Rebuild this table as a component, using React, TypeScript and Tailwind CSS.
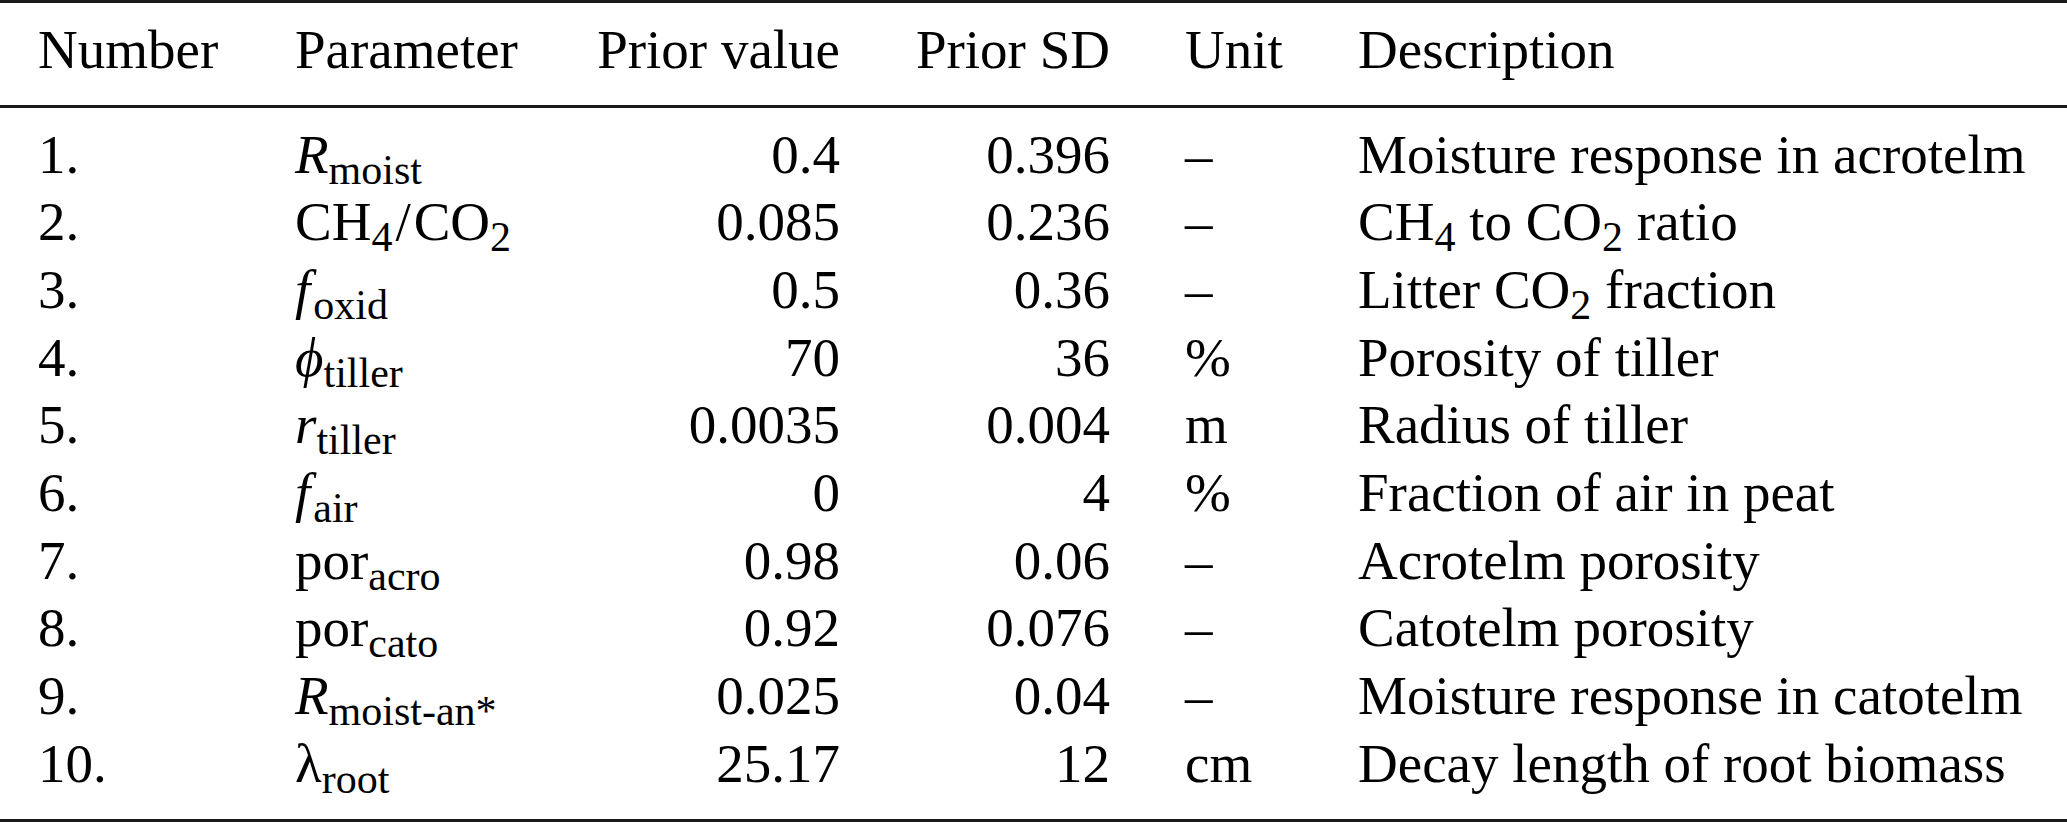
import React from "react";

const Sub = ({ children }: { children: React.ReactNode }) => (
  <span className="relative top-[11px] text-[42px] leading-none">{children}</span>
);

const I = ({ children }: { children: React.ReactNode }) => <span className="italic">{children}</span>;

type Row = {
  n: string;
  p: React.ReactNode;
  v: string;
  sd: string;
  u: string;
  d: React.ReactNode;
};

const rows: Row[] = [
  { n: "1.", p: <><I>R</I><Sub>moist</Sub></>, v: "0.4", sd: "0.396", u: "–", d: "Moisture response in acrotelm" },
  { n: "2.", p: <>CH<Sub>4</Sub><span className="mx-[3px]">/</span>CO<Sub>2</Sub></>, v: "0.085", sd: "0.236", u: "–", d: <>CH<Sub>4</Sub> to CO<Sub>2</Sub> ratio</> },
  { n: "3.", p: <><I>f</I><Sub><span className="ml-[3px]">oxid</span></Sub></>, v: "0.5", sd: "0.36", u: "–", d: <>Litter CO<Sub>2</Sub> fraction</> },
  { n: "4.", p: <><I>ϕ</I><Sub>tiller</Sub></>, v: "70", sd: "36", u: "%", d: "Porosity of tiller" },
  { n: "5.", p: <><I>r</I><Sub>tiller</Sub></>, v: "0.0035", sd: "0.004", u: "m", d: "Radius of tiller" },
  { n: "6.", p: <><I>f</I><Sub><span className="ml-[3px]">air</span></Sub></>, v: "0", sd: "4", u: "%", d: "Fraction of air in peat" },
  { n: "7.", p: <>por<Sub>acro</Sub></>, v: "0.98", sd: "0.06", u: "–", d: "Acrotelm porosity" },
  { n: "8.", p: <>por<Sub>cato</Sub></>, v: "0.92", sd: "0.076", u: "–", d: "Catotelm porosity" },
  { n: "9.", p: <><I>R</I><Sub>moist-an*</Sub></>, v: "0.025", sd: "0.04", u: "–", d: "Moisture response in catotelm" },
  { n: "10.", p: <>λ<Sub>root</Sub></>, v: "25.17", sd: "12", u: "cm", d: "Decay length of root biomass" },
];

const grid = "grid grid-cols-[257px_231px_314px_270px_248px_1fr] pl-[38px] leading-[67.7px] h-[67.7px] whitespace-nowrap";

export default function App() {
  return (
    <div className="w-[2067px] h-[822px] bg-white text-black font-['Liberation_Serif',serif] text-[55px]">
      <div className="h-[3px] bg-[#1a1a1a]" />
      <div className="pt-[12.6px] pb-[21.7px]">
        <div className={grid}>
          <div>Number</div>
          <div>Parameter</div>
          <div className="text-right">Prior value</div>
          <div className="text-right">Prior SD</div>
          <div className="pl-[75px]">Unit</div>
          <div>Description</div>
        </div>
      </div>
      <div className="h-[3px] bg-[#1a1a1a]" />
      <div className="pt-[12.6px] pb-[21.7px]">
        {rows.map((r) => (
          <div key={r.n} className={grid}>
            <div>{r.n}</div>
            <div>{r.p}</div>
            <div className="text-right">{r.v}</div>
            <div className="text-right">{r.sd}</div>
            <div className="pl-[75px]">{r.u}</div>
            <div>{r.d}</div>
          </div>
        ))}
      </div>
      <div className="h-[3px] bg-[#1a1a1a]" />
    </div>
  );
}
